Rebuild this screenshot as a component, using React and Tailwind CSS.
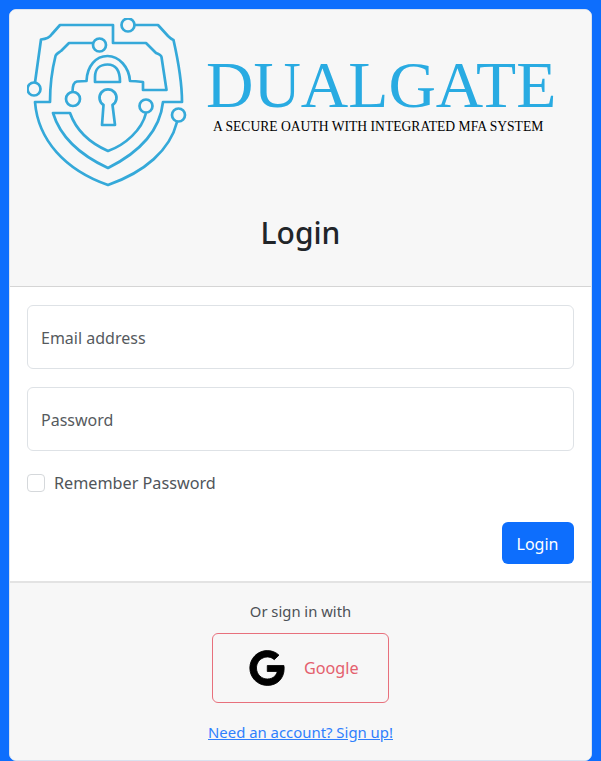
import React from "react";
import { FaGoogle } from "react-icons/fa";

const Shield = () => (
  <svg viewBox="27 18 165 170" className="w-[165px] h-[170px] shrink-0" fill="none" stroke="#35a9d9" strokeWidth="2.7" strokeLinejoin="round">
    <circle cx="34" cy="89" r="6.500" />
    <path d="M35 82.500 L41 39.500 C47 39 50 37 52 34 L60 25 L113 25 L113 43 L146 43 L156 53 C159 54 161 55 161.500 57 L166.500 90 L143 90 L143 82 C139 81.500 134 81 130 81 C129 67 119 56 107.500 56 C96 56 87 66 86.500 81 L77 81.500 C74 82 72.500 86 72.500 92" />
    <circle cx="73" cy="99" r="7" />
    <path d="M95 82 L95 77 C95 69 100 64.500 107.500 64.500 C115 64.500 120 70 120 82 Z" />
    <path d="M103.500 105 A8.500 8.500 0 1 1 112.500 105 L115 125 L102 125 Z" />
    <circle cx="128" cy="25" r="6.500" />
    <path d="M135 25 L158 25 L168 36 C170 38 172 39.500 173.500 40 C178 60 182 80 182 102 L163 102 C160 130 140 152 108 168 C80 155 60 136 53 113 L70 113 C76 130 90 143 108 151 C125 145 142 130 146 113" />
    <circle cx="146" cy="106" r="6.500" />
    <circle cx="99.500" cy="45" r="6.500" />
    <path d="M93 43 L69 43 L61 51 C58 53 56 54 55.500 56 C52 70 50 85 50 102 L35 102 C38 140 65 170 108 185 C145 172 170 150 177 122" />
    <circle cx="178.500" cy="115" r="6.500" />
  </svg>
);

export default function App() {
  return (
    <div className="h-[761px] overflow-hidden bg-[#0d6efd] px-[9px] pt-[9px] font-['Noto_Sans','Open_Sans',sans-serif] text-[#212529]">
      <div className="flex h-[752px] flex-col overflow-hidden rounded-[7px] border border-[#d9e2ef] bg-white">
        <div className="h-[277px] shrink-0 border-b border-[#d5d5d5] bg-[#f7f7f7] pl-[17px] pt-[8px]">
          <div className="flex h-[170px] items-start">
            <Shield />
            <div className="ml-[14px] flex flex-col font-['Liberation_Serif',serif]">
              <div className="mt-[38px] text-[65.700px] leading-[58px] text-[#29abe2]">DUALGATE</div>
              <div className="ml-[7px] mt-[5px] whitespace-nowrap text-[13.600px] leading-[16px] text-black">A SECURE OAUTH WITH INTEGRATED MFA SYSTEM</div>
            </div>
          </div>
          <h1 className="mr-[17px] mt-[27px] text-center text-[30px] font-medium leading-[36px] text-[#212529]">Login</h1>
        </div>
        <div className="flex min-h-0 flex-1 flex-col px-[17px] pt-[18px]">
          <div className="flex h-[64px] items-center rounded-[6px] border border-[#dee2e6] bg-white pl-[13px] pt-[1px] text-[16px] text-[#565a5e]">Email address</div>
          <div className="mt-[18px] flex h-[64px] items-center rounded-[6px] border border-[#dee2e6] bg-white pl-[13px] pt-[1px] text-[16px] text-[#565a5e]">Password</div>
          <div className="mt-[23px] flex items-center">
            <span className="h-[18px] w-[18px] rounded-[4px] border border-[#d5d8db] bg-white" />
            <span className="ml-[9px] text-[16.200px] leading-[18px] text-[#50555a]">Remember Password</span>
          </div>
          <div className="mt-[30px] flex justify-end">
            <button className="flex h-[42px] w-[72px] items-center justify-center rounded-[6px] bg-[#0d6efd] pt-[1px] pr-[1px] text-[16px] text-white">Login</button>
          </div>
        </div>
        <div className="flex h-[179px] shrink-0 flex-col items-center border-t-2 border-[#e3e3e3] bg-[#f7f7f7] pt-[17px]">
          <div className="text-[14.800px] leading-[22px] text-[#4c5156]">Or sign in with</div>
          <div className="mt-[11px] flex h-[70px] w-[177px] items-center rounded-[6px] border border-[#e8707c] pl-[36px]">
            <FaGoogle className="h-[36px] w-[36px] text-black" stroke="currentColor" strokeWidth="12" />
            <span className="ml-[19px] text-[16.200px] text-[#e4606d]">Google</span>
          </div>
          <a className="mt-[17px] text-[14.900px] leading-[24px] text-[#2f7ffd] underline" href="#">Need an account? Sign up!</a>
        </div>
      </div>
    </div>
  );
}
